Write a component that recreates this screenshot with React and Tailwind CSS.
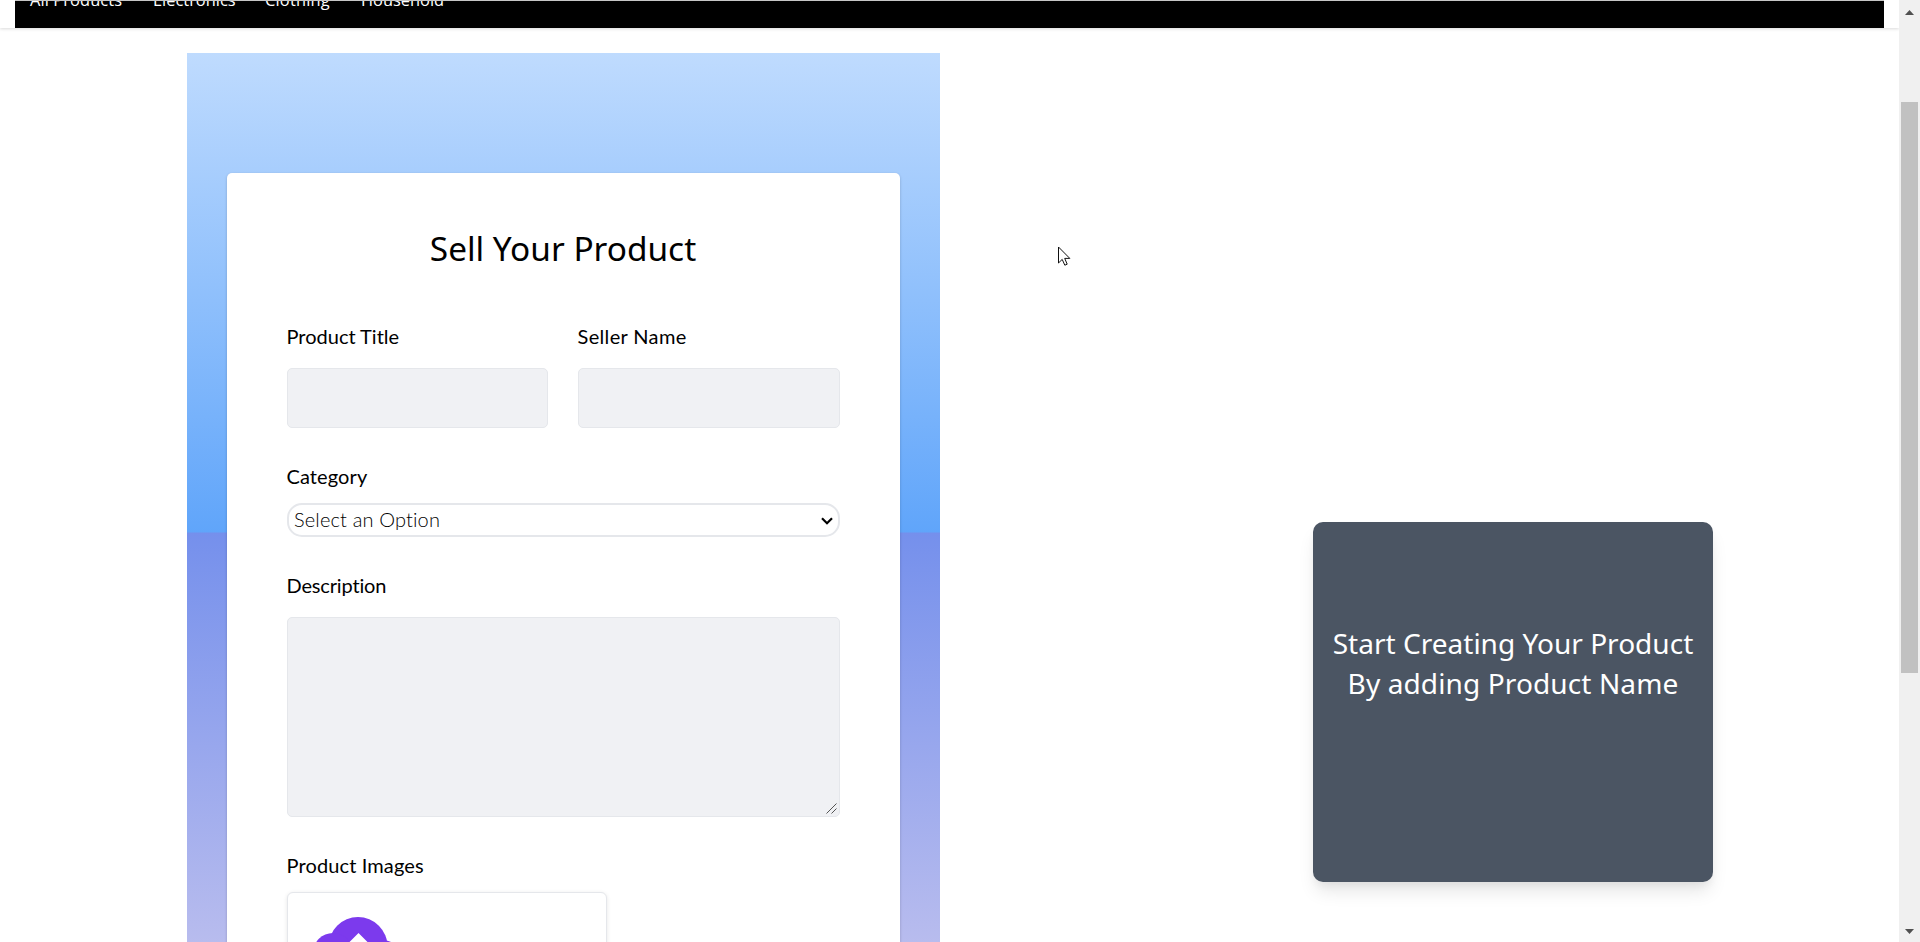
import React from "react";

const links = [
  { name: "All Products", style: "w-[93px] tracking-[0.1px]" },
  { name: "Electronics", style: "w-[82px]" },
  { name: "Clothing", style: "w-[66px] tracking-[0.2px]" },
  { name: "Household", style: "w-[84px]" },
];

function NavBar() {
  return (
    <header className="h-7 shrink-0 bg-white px-[15px] shadow-[0_1px_3px_rgba(0,0,0,0.15)]">
      <nav className="flex h-7 items-start gap-[30px] overflow-hidden border-t border-[#c6c6c6] bg-black pl-[15px] font-['Open_Sans',sans-serif] text-[16.4px] leading-5 text-white">
        {links.map((link) => (
          <a key={link.name} className={`-mt-[11px] whitespace-nowrap ${link.style}`}>
            {link.name}
          </a>
        ))}
      </nav>
    </header>
  );
}

function Label({ children, className = "" }) {
  return (
    <label className={`-ml-[0.5px] block h-6 font-['Lato',sans-serif] text-[20px] leading-6 whitespace-nowrap text-black [font-variant-ligatures:none] ${className}`}>
      {children}
    </label>
  );
}

function UploadIcon() {
  return (
    <svg className="ml-[26px] mt-[24px] block" width="86" height="60" viewBox="0 0 86 60">
      <g fill="#7c3aed">
        <circle cx="44" cy="29.5" r="29.5" />
        <circle cx="19" cy="36" r="20" />
        <circle cx="70" cy="42" r="18.5" />
      </g>
      <path d="M44.5 16L61.5 33H50.5V52H38.5V33H27.5Z" fill="#fff" />
    </svg>
  );
}

function ProductForm() {
  return (
    <section className="h-[960px] w-[753px] shrink-0 bg-[linear-gradient(to_bottom,#bfdbfe_0,#60a5fa_479px,#7590ec_480px,#b8bcee_889px,#bcbfee_960px)] px-10 pt-[120px]">
      <form className="h-[840px] rounded-t-[5px] bg-white px-[60px] pt-[55px] shadow-[0_1px_3px_rgba(0,0,0,0.2)]">
        <h1 className="-ml-px text-center font-['Noto_Sans',sans-serif] text-[33.4px] leading-10 text-black">
          Sell Your Product
        </h1>
        <div className="mt-14 grid grid-cols-[261px_262px] gap-[30px]">
          <div>
            <Label>Product Title</Label>
            <div className="mt-5 h-[60px] rounded-[5px] border border-[#e5e7eb] bg-[#f0f1f4]" />
          </div>
          <div>
            <Label className="tracking-[0.35px]">Seller Name</Label>
            <div className="mt-5 h-[60px] rounded-[5px] border border-[#e5e7eb] bg-[#f0f1f4]" />
          </div>
        </div>
        <Label className="mt-9 tracking-[0.1px]">Category</Label>
        <div className="mt-[15px] flex h-[34px] items-center justify-between rounded-[15px] border-2 border-[#e5e7eb] bg-white px-[5px]">
          <span className="-mt-[3px] font-['Lato',sans-serif] text-[20px] leading-6 font-light tracking-[0.15px] text-black [font-variant-ligatures:none]">
            Select an Option
          </span>
          <svg className="mt-0.5" width="12" height="8" viewBox="0 0 12 8" fill="none" stroke="#000" strokeWidth="2.2">
            <path d="M1 1.2L6 6.2L11 1.2" />
          </svg>
        </div>
        <Label className="mt-9 tracking-[-0.15px]">Description</Label>
        <div className="mt-5 flex h-[200px] items-end justify-end rounded-[5px] border border-[#e5e7eb] bg-[#f0f1f4] p-[2px]">
          <svg width="11" height="11" viewBox="0 0 11 11" stroke="#555" strokeWidth="1">
            <path d="M0.5 10.5L10.5 0.5M5.5 10.5L10.5 5.5" />
          </svg>
        </div>
        <Label className="mt-9 tracking-[0.12px]">Product Images</Label>
        <div className="mt-[15px] h-[120px] w-80 rounded-[6px] border border-[#e5e7eb] bg-white shadow-[0_1px_4px_rgba(0,0,0,0.1)]">
          <UploadIcon />
        </div>
      </form>
    </section>
  );
}

function PreviewCard() {
  return (
    <aside className="mt-[469px] ml-[373px] h-[360px] w-[400px] shrink-0 rounded-[10px] bg-[#4b5563] pt-[101px] text-center font-['Noto_Sans',sans-serif] text-[28.05px] leading-10 text-white shadow-[0_12px_18px_-3px_rgba(0,0,0,0.1),0_5px_8px_-2px_rgba(0,0,0,0.05)]">
      <p className="whitespace-nowrap">Start Creating Your Product</p>
      <p className="tracking-[0.1px] whitespace-nowrap">By adding Product Name</p>
    </aside>
  );
}

function ScrollBar() {
  return (
    <div className="flex h-full w-[21px] shrink-0 flex-col items-center bg-[#f0f0f0]">
      <svg className="mt-[10px] shrink-0" width="9" height="5" viewBox="0 0 9 5" fill="#505050">
        <path d="M0 5L4.5 0L9 5Z" />
      </svg>
      <div className="mt-[87px] h-[571px] w-[17px] shrink-0 bg-[#c1c1c1]" />
      <svg className="mt-auto mb-[8px] shrink-0" width="9" height="5" viewBox="0 0 9 5" fill="#505050">
        <path d="M0 0L4.5 5L9 0Z" />
      </svg>
    </div>
  );
}

export default function App() {
  return (
    <div className="relative flex h-[942px] w-full overflow-hidden bg-white">
      <div className="flex h-full w-[1899px] shrink-0 flex-col overflow-hidden">
        <NavBar />
        <main className="flex items-start pt-[25px] pl-[187px]">
          <ProductForm />
          <PreviewCard />
        </main>
      </div>
      <ScrollBar />
      <svg className="absolute top-[246px] left-[1058px]" width="13" height="21" viewBox="0 0 13 21" fill="#fff" stroke="#111" strokeWidth="1">
        <path d="M0.5 1V17L4.2 13.4L6.8 19.2L9.2 18.2L6.7 12.4H11.8Z" />
      </svg>
    </div>
  );
}
